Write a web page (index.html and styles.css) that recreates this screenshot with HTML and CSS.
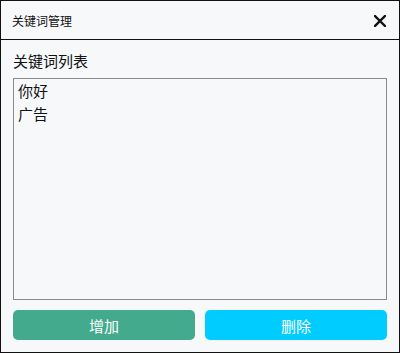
FILE: index.html
```html
<!DOCTYPE html>
<html lang="zh-CN">
<head>
    <meta charset="UTF-8">
    <title>关键词管理</title>
    <link rel="stylesheet" href="styles.css">
</head>
<body>
    <div class="dialog">
        <div class="dialog-header">
            <span class="dialog-title">关键词管理</span>
            <span class="close-btn">
                <svg width="12" height="12" viewBox="0 0 12 12">
                    <path d="M1 1 L11 11 M11 1 L1 11" stroke="#111" stroke-width="2.4" stroke-linecap="square"/>
                </svg>
            </span>
        </div>
        <div class="dialog-body">
            <div class="list-label">关键词列表</div>
            <ul class="keyword-list">
                <li>你好</li>
                <li>广告</li>
            </ul>
            <div class="actions">
                <button class="btn btn-add">增加</button>
                <button class="btn btn-del">删除</button>
            </div>
        </div>
    </div>
</body>
</html>
```

FILE: styles.css
```css
body { margin: 0; font-family: "Noto Sans CJK SC", "Noto Sans", sans-serif; color: #111; }
.dialog {
    width: 400px;
    height: 353px;
    box-sizing: border-box;
    border: 1px solid #111;
    background: #f6f8fa;
    display: flex;
    flex-direction: column;
}
.dialog-header {
    height: 38px;
    border-bottom: 1px solid #111;
    display: flex;
    align-items: center;
    justify-content: space-between;
    padding: 0 13px 0 11px;
}
.dialog-title { font-size: 12px; }
.close-btn { display: flex; margin-top: 2px; }
.dialog-body {
    flex: 1;
    padding: 10px 12px 12px;
    display: flex;
    flex-direction: column;
}
.list-label {
    font-size: 15px;
    line-height: 21px;
    margin-bottom: 7px;
}
.keyword-list {
    list-style: none;
    margin: 0;
    padding: 0 4px;
    height: 222px;
    box-sizing: border-box;
    border: 1px solid #8a8a8a;
    background: #f6f8fa;
}
.keyword-list li { font-size: 15px; line-height: 23px; }
.actions {
    display: flex;
    gap: 10px;
    margin-top: 10px;
}
.btn {
    flex: 1;
    height: 30px;
    border: none;
    border-radius: 5px;
    color: #fff;
    font-family: inherit;
    font-size: 15px;
    padding: 0;
}
.btn-add { background: #43aa8e; }
.btn-del { background: #00ccff; }
```
